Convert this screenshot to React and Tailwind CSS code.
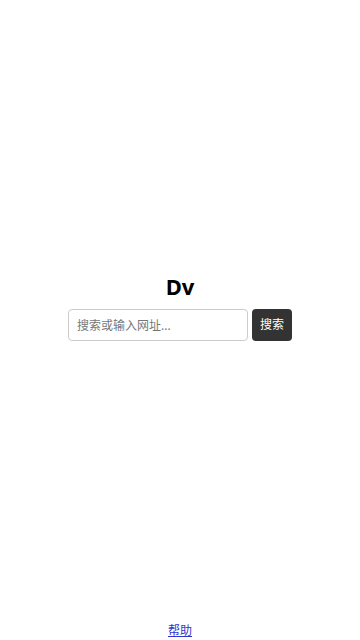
export default function App() {
  return (
    <div className="flex h-screen flex-col bg-white" style={{ fontFamily: '"Noto Sans", "Noto Sans CJK SC", sans-serif' }}>
      <div className="flex flex-1 flex-col items-center justify-center pb-[8px]">
        <h1 className="mb-[8px] text-[22px] font-bold leading-[30px] text-black">Dv</h1>
        <div className="flex items-center gap-[4px]">
          <input
            type="text"
            placeholder="搜索或输入网址..."
            className="h-[32px] w-[180px] rounded-[4px] border border-[#cccccc] px-[8px] text-[12px] text-[#333] placeholder:text-[#777] outline-none"
          />
          <button className="h-[32px] w-[40px] rounded-[4px] bg-[#333333] text-[12px] text-white">搜索</button>
        </div>
      </div>
      <div className="flex h-[20px] items-start justify-center pt-[2px]">
        <a href="#" className="text-[12px] leading-[18px] text-[#3333cc] underline">帮助</a>
      </div>
    </div>
  );
}
